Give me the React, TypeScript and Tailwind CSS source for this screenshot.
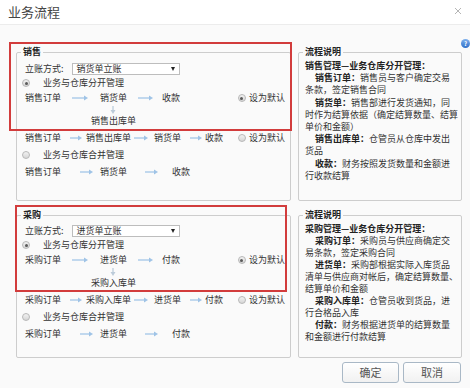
import React from "react";

type Flow = {
  title: string;
  mode: string;
  order: string;
  bill: string;
  pay: string;
  stock: string;
};

const sales: Flow = {
  title: "销售",
  mode: "销货单立账",
  order: "销售订单",
  bill: "销货单",
  pay: "收款",
  stock: "销售出库单",
};

const purchase: Flow = {
  title: "采购",
  mode: "进货单立账",
  order: "采购订单",
  bill: "进货单",
  pay: "付款",
  stock: "采购入库单",
};

type Line = { b?: string; t?: string; indent?: boolean };

const salesNotes: Line[] = [
  { b: "销售管理—业务仓库分开管理：" },
  { b: "销售订单：", t: "销售员与客户确定交易", indent: true },
  { t: "条款，签定销售合同" },
  { b: "销货单：", t: "销售部进行发货通知，同", indent: true },
  { t: "时作为结算依据（确定结算数量、结算" },
  { t: "单价和金额）" },
  { b: "销售出库单：", t: "仓管员从仓库中发出", indent: true },
  { t: "货品" },
  { b: "收款：", t: "财务按照发货数量和金额进", indent: true },
  { t: "行收款结算" },
];

const purchaseNotes: Line[] = [
  { b: "采购管理—业务仓库分开管理：" },
  { b: "采购订单：", t: "采购员与供应商确定交", indent: true },
  { t: "易条款，签定采购合同" },
  { b: "进货单：", t: "采购部根据实际入库货品", indent: true },
  { t: "清单与供应商对帐后，确定结算数量、" },
  { t: "结算单价和金额" },
  { b: "采购入库单：", t: "仓管员收到货品，进", indent: true },
  { t: "行合格品入库" },
  { b: "付款：", t: "财务根据进货单的结算数量", indent: true },
  { t: "和金额进行付款结算" },
];

function Arrow({ w, className }: { w: number; className?: string }) {
  return (
    <svg width={w} height="6" viewBox={`0 0 ${w} 6`} className={className}>
      <rect x="0" y="2.2" width={w - 3} height="1.6" fill="#b3d0ec" />
      <path d={`M${w - 4} 0.5 L${w} 3 L${w - 4} 5.5 Z`} fill="#9fc3e6" />
    </svg>
  );
}

function DownArrow({ className }: { className?: string }) {
  return (
    <svg width="6" height="8" viewBox="0 0 6 8" className={className}>
      <rect x="2.2" y="0" width="1.6" height="5" fill="#c9d6e2" />
      <path d="M0.5 4 L3 8 L5.5 4 Z" fill="#bccbd9" />
    </svg>
  );
}

function Radio({ checked, className }: { checked?: boolean; className?: string }) {
  return (
    <span
      className={`${className ?? ""} flex h-[8px] w-[8px] shrink-0 items-center justify-center rounded-full border border-[#b8b8b8] bg-gradient-to-b from-[#f2f2f2] to-[#d6d6d6]`}
    >
      {checked && <span className="h-[3px] w-[3px] rounded-full bg-[#5a5a5a]" />}
    </span>
  );
}

function Default({ checked }: { checked?: boolean }) {
  return (
    <div className="flex items-center">
      <Radio checked={checked} className="h-[7px] w-[7px]" />
      <span className="ml-[3px]">设为默认</span>
    </div>
  );
}

function FlowSection({ d, top }: { d: Flow; top: string }) {
  return (
    <fieldset className="h-full min-w-0 rounded-[2px] border border-[#cdcdcd] pl-[8px] pr-[5px]">
      <legend className="-ml-[4px] px-[2px] text-[9px] font-bold leading-[12px] text-[#222]">{d.title}</legend>
      <div className={`${top} flex h-[14px] items-center`}>
        <span>立账方式:</span>
        <div className="ml-[8px] flex h-[12px] w-[108px] items-center justify-between border border-[#bdbdbd] bg-white pl-[4px] pr-[4px]">
          <span>{d.mode}</span>
          <span className="h-0 w-0 border-x-[2.5px] border-t-[4px] border-x-transparent border-t-[#222]" />
        </div>
      </div>
      <div className="flex h-[14px] items-center">
        <Radio checked className="-ml-[3px]" />
        <span className="ml-[13px]">业务与仓库分开管理</span>
      </div>
      <div className="flex h-[16px] items-center justify-between">
        <div className="flex items-center">
          <span>{d.order}</span>
          <Arrow w={16} className="ml-[11px]" />
          <span className="ml-[12px]">{d.bill}</span>
          <Arrow w={15} className="ml-[11px]" />
          <span className="ml-[9px]">{d.pay}</span>
        </div>
        <Default checked />
      </div>
      <div className="flex h-[8px] items-center">
        <DownArrow className="ml-[85px]" />
      </div>
      <div className="flex h-[14px] items-center">
        <span className="ml-[66px]">{d.stock}</span>
      </div>
      <div className="flex h-[20px] items-center justify-between">
        <div className="flex items-center">
          <span>{d.order}</span>
          <Arrow w={12} className="ml-[9px]" />
          <span className="ml-[4px]">{d.stock}</span>
          <Arrow w={14} className="ml-[3px]" />
          <span className="ml-[6px]">{d.bill}</span>
          <Arrow w={12} className="ml-[9px]" />
          <span className="ml-[3px]">{d.pay}</span>
        </div>
        <Default />
      </div>
      <div className="flex h-[14px] items-center">
        <Radio className="-ml-[3px]" />
        <span className="ml-[13px]">业务与仓库合并管理</span>
      </div>
      <div className="flex h-[20px] items-center">
        <span>{d.order}</span>
        <Arrow w={13} className="ml-[19px]" />
        <span className="ml-[7px]">{d.bill}</span>
        <Arrow w={13} className="ml-[18px]" />
        <span className="ml-[14px]">{d.pay}</span>
      </div>
    </fieldset>
  );
}

function Notes({ lines, leading }: { lines: Line[]; leading: string }) {
  return (
    <fieldset className="h-full min-w-0 rounded-[2px] border border-[#cdcdcd] pl-[6px] pr-[2px]">
      <legend className="-ml-[2px] px-[2px] text-[9px] font-bold leading-[12px] text-[#222]">流程说明</legend>
      <div className={`mt-[2px] ${leading}`}>
        {lines.map((l, i) => (
          <div key={i} className={`whitespace-nowrap ${l.indent ? "pl-[10px]" : ""}`}>
            {l.b && <span className="font-bold text-[#222]">{l.b}</span>}
            {l.t && <span>{l.t}</span>}
          </div>
        ))}
      </div>
    </fieldset>
  );
}

export default function App() {
  return (
    <div className="relative h-[388px] w-[470px] overflow-hidden bg-[#fafafa] font-['Noto_Sans_CJK_SC',sans-serif] text-[9px] leading-[12px] text-[#333]">
      <header className="flex h-[25px] items-center justify-between border-b border-[#ececec] bg-white pl-[8px] pr-[8px]">
        <h1 className="text-[13px] leading-[16px] text-[#444]">业务流程</h1>
        <svg width="8" height="8" viewBox="0 0 8 8" className="mt-[-2px]">
          <path d="M1 1 L7 7 M7 1 L1 7" stroke="#b5b5b5" strokeWidth="1" />
        </svg>
      </header>

      <div className="grid grid-cols-[275px_164px] grid-rows-[155px_149px] gap-x-[7px] gap-y-[8px] pl-[16px] pt-[21px]">
        <FlowSection d={sales} top="mt-[4px]" />
        <Notes lines={salesNotes} leading="leading-[12.2px]" />
        <FlowSection d={purchase} top="mt-[3px]" />
        <Notes lines={purchaseNotes} leading="leading-[12px]" />
      </div>

      <div className="mt-[4px] flex justify-end gap-[4px] pr-[9px]">
        <button className="h-[21px] w-[57px] rounded-[3px] border border-[#a9b8c6] bg-gradient-to-b from-white to-[#f1f1f1] text-[11px] leading-[19px] text-[#555]">
          确定
        </button>
        <button className="h-[21px] w-[58px] rounded-[3px] border border-[#a9b8c6] bg-gradient-to-b from-white to-[#f1f1f1] text-[11px] leading-[19px] text-[#555]">
          取消
        </button>
      </div>

      {/* help icon */}
      <span className="absolute left-[461px] top-[39px] flex h-[9px] w-[9px] items-center justify-center rounded-full bg-gradient-to-b from-[#7fb0ec] to-[#2d6fc9] text-[6px] font-bold leading-none text-white">
        ?
      </span>

      {/* red annotation boxes */}
      <div className="pointer-events-none absolute left-[9px] top-[42px] h-[89px] w-[283px] border-2 border-[#d23c3c]" />
      <div className="pointer-events-none absolute left-[15px] top-[205px] h-[87px] w-[272px] border-2 border-[#d23c3c]" />
    </div>
  );
}
